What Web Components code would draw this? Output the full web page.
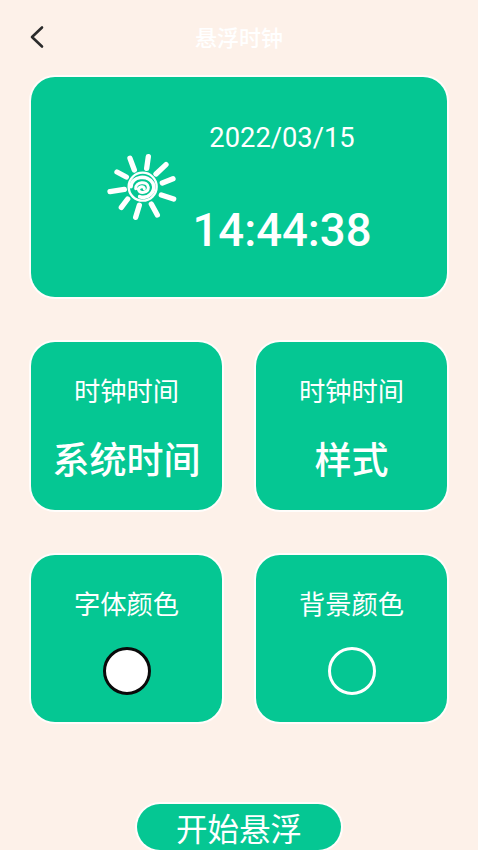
<!DOCTYPE html>
<html lang="zh">
<head>
<meta charset="utf-8">
<title>悬浮时钟</title>
<style>
	html, body { margin: 0; height: 100%; }
	body {
		background: #fdf1e9;
		font-family: "Noto Sans CJK SC", "Noto Sans", sans-serif;
		color: #fff;
		overflow: hidden;
	}
	.page {
		height: 850px;
		box-sizing: border-box;
		display: flex;
		flex-direction: column;
		padding: 0 31px;
	}
	.grid {
		display: grid;
		grid-template-columns: 191px 191px;
		grid-template-rows: 168px 167px;
		column-gap: 34px;
		row-gap: 45px;
		margin-top: 45px;
	}
</style>
</head>
<body>
<div class="page">
	<app-header>悬浮时钟</app-header>
	<clock-card date="2022/03/15" time="14:44:38"></clock-card>
	<div class="grid">
		<option-card label="时钟时间">系统时间</option-card>
		<option-card label="时钟时间">样式</option-card>
		<option-card label="字体颜色"><color-swatch filled></color-swatch></option-card>
		<option-card label="背景颜色"><color-swatch></color-swatch></option-card>
	</div>
	<start-button>开始悬浮</start-button>
</div>

<script>
	class AppHeader extends HTMLElement {
		constructor() {
			super();
			this.attachShadow({ mode: 'open' });
			this.shadowRoot.innerHTML = /*html*/ `
				<style>
					:host {
						display: flex;
						align-items: center;
						justify-content: center;
						position: relative;
						height: 77px;
						padding-bottom: 4px;
						box-sizing: border-box;
					}
					.back {
						position: absolute;
						left: -2px;
						top: 25px;
						width: 16px;
						height: 24px;
					}
					.title {
						font-size: 22px;
						font-weight: 500;
						line-height: 1;
						color: #fff;
					}
				</style>
				<svg class="back" viewBox="0 0 16 24" fill="none" stroke="#2b2b2b" stroke-width="2.6" stroke-linecap="round" stroke-linejoin="round">
					<path d="M13 2.5 L3 12 L13 21.5"></path>
				</svg>
				<span class="title"><slot></slot></span>
			`;
		}
	}

	class ClockCard extends HTMLElement {
		constructor() {
			super();
			this.attachShadow({ mode: 'open' });
		}

		connectedCallback() {
			const date = this.getAttribute('date') || '';
			const time = this.getAttribute('time') || '';
			this.shadowRoot.innerHTML = /*html*/ `
				<style>
					:host {
						display: flex;
						align-items: center;
						height: 221px;
						box-sizing: border-box;
						background: #05c793;
						border-radius: 24px;
						box-shadow: 0 0 0 2px #fffdfb;
						color: #fff;
						font-family: Roboto, "Liberation Sans", sans-serif;
					}
					.sun {
						width: 100px;
						height: 90px;
						margin-left: 60px;
						margin-top: -3px;
						flex: none;
					}
					.texts {
						width: 180px;
						margin-left: 1px;
						display: flex;
						flex-direction: column;
						align-items: center;
						margin-top: 6px;
					}
					.date { font-size: 27.3px; line-height: 32px; }
					.time { font-size: 45.5px; line-height: 54px; margin-top: 50px; font-weight: 500; }
				</style>
				<svg class="sun" viewBox="0 0 300 270" fill="none" stroke="#fff" stroke-linecap="round">
					<g stroke-width="16">
						<path d="M117 55 L130 90"></path>
						<path d="M172 50 L167 85"></path>
						<path d="M225 74 L195 102"></path>
						<path d="M246 116 L214 129"></path>
						<path d="M248 177 L211 165"></path>
						<path d="M199 225 L181 192"></path>
						<path d="M145 196 L134 232"></path>
						<path d="M110 177 L91 202"></path>
						<path d="M100 148 L57 155"></path>
						<path d="M78 96 L106 111"></path>
					</g>
					<circle cx="155" cy="140" r="42" stroke-width="7"></circle>
					<path d="M120 140 C122 108 170 102 186 130 C196 156 170 178 146 170" stroke-width="11"></path>
					<path d="M134 146 C132 126 170 120 172 142 C172 160 146 162 142 148 C146 138 160 138 160 146" stroke-width="9"></path>
				</svg>
				<div class="texts">
					<span class="date">${date}</span>
					<span class="time">${time}</span>
				</div>
			`;
		}
	}

	class OptionCard extends HTMLElement {
		constructor() {
			super();
			this.attachShadow({ mode: 'open' });
		}

		connectedCallback() {
			const label = this.getAttribute('label') || '';
			this.shadowRoot.innerHTML = /*html*/ `
				<style>
					:host {
						display: flex;
						flex-direction: column;
						align-items: center;
						box-sizing: border-box;
						padding-top: 30px;
						background: #05c793;
						border-radius: 24px;
						box-shadow: 0 0 0 2px #fffdfb;
						color: #fff;
					}
					.label { font-size: 26.3px; line-height: 36px; }
					.value {
						margin-top: 23px;
						height: 54px;
						display: flex;
						align-items: center;
						font-size: 37px;
						line-height: 54px;
						font-weight: 500;
					}
				</style>
				<span class="label">${label}</span>
				<span class="value"><slot></slot></span>
			`;
		}
	}

	class ColorSwatch extends HTMLElement {
		constructor() {
			super();
			this.attachShadow({ mode: 'open' });
			this.shadowRoot.innerHTML = /*html*/ `
				<style>
					:host {
						display: block;
						width: 48px;
						height: 48px;
						box-sizing: border-box;
						border-radius: 50%;
						border: 3px solid #fff;
					}
					:host([filled]) {
						background: #fff;
						border: 3px solid #0a0a0a;
					}
				</style>
			`;
		}
	}

	class StartButton extends HTMLElement {
		constructor() {
			super();
			this.attachShadow({ mode: 'open' });
			this.shadowRoot.innerHTML = /*html*/ `
				<style>
					:host {
						display: flex;
						align-items: center;
						justify-content: center;
						align-self: center;
						width: 204px;
						height: 46px;
						margin-top: 82px;
						flex: none;
						box-sizing: border-box;
						background: #05c793;
						border-radius: 23px;
						box-shadow: 0 0 0 2px #fffdfb;
						color: #fff;
						font-size: 31.5px;
						line-height: 46px;
					}
				</style>
				<slot></slot>
			`;
		}
	}

	customElements.define('app-header', AppHeader);
	customElements.define('clock-card', ClockCard);
	customElements.define('option-card', OptionCard);
	customElements.define('color-swatch', ColorSwatch);
	customElements.define('start-button', StartButton);
</script>
</body>
</html>
